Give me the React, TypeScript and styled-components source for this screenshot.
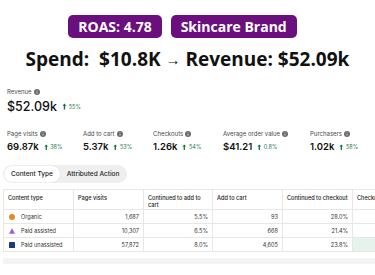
import React from 'react';
import styled, { createGlobalStyle } from 'styled-components';

const GlobalStyle = createGlobalStyle`
  html, body {
    margin: 0;
    padding: 0;
    background: #ffffff;
    overflow: hidden;
  }
  body {
    font-family: Inter, "Noto Sans", sans-serif;
    color: #111;
  }
`;

type Metric = { label: string; value: string; delta: string };

const metrics: Metric[] = [
  { label: 'Page visits', value: '69.87k', delta: '38%' },
  { label: 'Add to cart', value: '5.37k', delta: '53%' },
  { label: 'Checkouts', value: '1.26k', delta: '54%' },
  { label: 'Average order value', value: '$41.21', delta: '0.8%' },
  { label: 'Purchasers', value: '1.02k', delta: '58%' },
];

type Row = {
  name: string;
  marker: 'circle' | 'triangle' | 'square';
  visits: string;
  contRate: string;
  cart: string;
  checkoutRate: string;
  highlight?: boolean;
};

const rows: Row[] = [
  { name: 'Organic', marker: 'circle', visits: '1,687', contRate: '5.5%', cart: '93', checkoutRate: '28.0%' },
  { name: 'Paid assisted', marker: 'triangle', visits: '10,307', contRate: '6.5%', cart: '668', checkoutRate: '21.4%' },
  { name: 'Paid unassisted', marker: 'square', visits: '57,872', contRate: '8.0%', cart: '4,605', checkoutRate: '23.8%', highlight: true },
];

function InfoIcon() {
  return (
    <svg width="6" height="6" viewBox="0 0 16 16">
      <circle cx="8" cy="8" r="8" fill="#6b6b6b" />
      <rect x="7" y="7" width="2" height="5" rx="1" fill="#fff" />
      <circle cx="8" cy="4.6" r="1.1" fill="#fff" />
    </svg>
  );
}

function UpArrow({ size }: { size: number }) {
  return (
    <svg width={size * 0.7} height={size} viewBox="0 0 10 14">
      <path d="M5 1 L1 5.5 H3.6 V13 H6.4 V5.5 H9 Z" fill="#0f6e45" />
    </svg>
  );
}

function Marker({ kind }: { kind: Row['marker'] }) {
  if (kind === 'circle') {
    return (
      <svg width="6" height="6" viewBox="0 0 10 10">
        <circle cx="5" cy="5" r="5" fill="#e5892b" />
      </svg>
    );
  }
  if (kind === 'triangle') {
    return (
      <svg width="6" height="6" viewBox="0 0 10 10">
        <path d="M5 0.5 L10 9.5 H0 Z" fill="#a45ad8" />
      </svg>
    );
  }
  return (
    <svg width="6" height="6" viewBox="0 0 10 10">
      <rect width="10" height="10" rx="1" fill="#1b3787" />
    </svg>
  );
}

export default function App() {
  return (
    <Page>
      <GlobalStyle />
      <Hero>
        <BadgeRow>
          <Badge>ROAS: 4.78</Badge>
          <Badge>Skincare Brand</Badge>
        </BadgeRow>
        <Headline>
          Spend:&nbsp; $10.8K <Arrow>→</Arrow> Revenue: $52.09k
        </Headline>
      </Hero>

      <Stats>
        <StatLabel>
          Revenue <InfoIcon />
        </StatLabel>
        <StatLine>
          <BigValue>$52.09k</BigValue>
          <Delta>
            <UpArrow size={7} />
            55%
          </Delta>
        </StatLine>

        <MetricRow>
          {metrics.map((m) => (
            <MetricCell key={m.label}>
              <StatLabel>
                {m.label} <InfoIcon />
              </StatLabel>
              <StatLine>
                <MetricValue>{m.value}</MetricValue>
                <Delta>
                  <UpArrow size={6.5} />
                  {m.delta}
                </Delta>
              </StatLine>
            </MetricCell>
          ))}
        </MetricRow>
      </Stats>

      <Tabs>
        <Tab $active>Content Type</Tab>
        <Tab>Attributed Action</Tab>
      </Tabs>

      <TableWrap>
        <Table>
          <colgroup>
            <col style={{ width: 70 }} />
            <col style={{ width: 70 }} />
            <col style={{ width: 69 }} />
            <col style={{ width: 70 }} />
            <col style={{ width: 70 }} />
            <col style={{ width: 70 }} />
          </colgroup>
          <thead>
            <tr>
              <Th>Content type</Th>
              <Th>Page visits</Th>
              <Th>Continued to add to cart</Th>
              <Th>Add to cart</Th>
              <Th>Continued to checkout</Th>
              <Th>Checkouts</Th>
            </tr>
          </thead>
          <tbody>
            {rows.map((r) => (
              <tr key={r.name}>
                <Td>
                  <NameCell>
                    <Marker kind={r.marker} />
                    {r.name}
                  </NameCell>
                </Td>
                <Td $num>{r.visits}</Td>
                <Td $num>{r.contRate}</Td>
                <Td $num>{r.cart}</Td>
                <Td $num>{r.checkoutRate}</Td>
                <Td $num $highlight={r.highlight}></Td>
              </tr>
            ))}
          </tbody>
        </Table>
        <ScrollTrack />
      </TableWrap>
    </Page>
  );
}

const Page = styled.div`
  width: 375px;
  height: 275px;
  overflow: hidden;
`;

const Hero = styled.div`
  display: flex;
  flex-direction: column;
  align-items: center;
  padding-top: 15px;
`;

const BadgeRow = styled.div`
  display: flex;
  gap: 9px;
  padding-right: 10px;
`;

const Badge = styled.div`
  background: #6c0f7e;
  color: #fff;
  font-family: "Open Sans", "Noto Sans", sans-serif;
  font-weight: 700;
  font-size: 14px;
  line-height: 23px;
  height: 23px;
  padding: 0 10px;
  border-radius: 5px;
`;

const Headline = styled.div`
  margin-top: 10px;
  font-family: "Open Sans", "Noto Sans", sans-serif;
  font-weight: 700;
  font-size: 19px;
  line-height: 22px;
  color: #111;
  white-space: nowrap;
`;

const Arrow = styled.span`
  font-size: 15px;
  font-weight: 800;
  vertical-align: 1px;
`;

const Stats = styled.div`
  padding: 17px 0 0 7px;
`;

const StatLabel = styled.div`
  display: flex;
  align-items: center;
  gap: 2px;
  font-size: 6px;
  color: #4a4a4a;
  line-height: 9px;
`;

const StatLine = styled.div`
  display: flex;
  align-items: center;
  gap: 5px;
  margin-top: 2px;
`;

const BigValue = styled.div`
  font-size: 12.5px;
  font-weight: 500;
  line-height: 17px;
  color: #111;
`;

const Delta = styled.div`
  display: flex;
  align-items: center;
  gap: 2px;
  font-size: 5.5px;
  color: #1b7a4e;
`;

const MetricRow = styled.div`
  display: grid;
  grid-template-columns: 76px 70px 70px 87px 70px;
  margin-top: 14px;
`;

const MetricCell = styled.div`
  display: flex;
  flex-direction: column;
  gap: 1px;
`;

const MetricValue = styled.div`
  font-size: 9.5px;
  font-weight: 600;
  line-height: 12px;
  color: #111;
`;

const Tabs = styled.div`
  display: inline-flex;
  margin: 12px 0 0 3px;
  padding: 1px;
  background: #efefef;
  border-radius: 9px;
`;

const Tab = styled.div<{ $active?: boolean }>`
  font-size: 6.5px;
  font-weight: 500;
  line-height: 16px;
  padding: 0 7px;
  border-radius: 8px;
  color: #222;
  background: ${(p) => (p.$active ? '#ffffff' : 'transparent')};
  box-shadow: ${(p) => (p.$active ? '0 0 1px rgba(0,0,0,0.15)' : 'none')};
`;

const TableWrap = styled.div`
  margin: 6px 0 0 3px;
`;

const Table = styled.table`
  border-collapse: collapse;
  table-layout: fixed;
  width: 419px;
  font-size: 5.6px;
  color: #333;
`;

const Th = styled.th`
  text-align: left;
  vertical-align: top;
  font-weight: 500;
  padding: 5px 3px 0 4px;
  height: 14px;
  line-height: 6.5px;
  border: 1px solid #e7e7e7;
  color: #222;
`;

const Td = styled.td<{ $num?: boolean; $highlight?: boolean }>`
  text-align: ${(p) => (p.$num ? 'right' : 'left')};
  padding: 0 4px;
  height: 13px;
  border: 1px solid #e7e7e7;
  background: ${(p) => (p.$highlight ? '#e5f3ec' : '#fff')};
`;

const NameCell = styled.div`
  display: flex;
  align-items: center;
  gap: 6px;
  padding-left: 1px;
`;

const ScrollTrack = styled.div`
  margin-top: 6px;
  height: 6px;
  background: #f4f4f4;
`;
